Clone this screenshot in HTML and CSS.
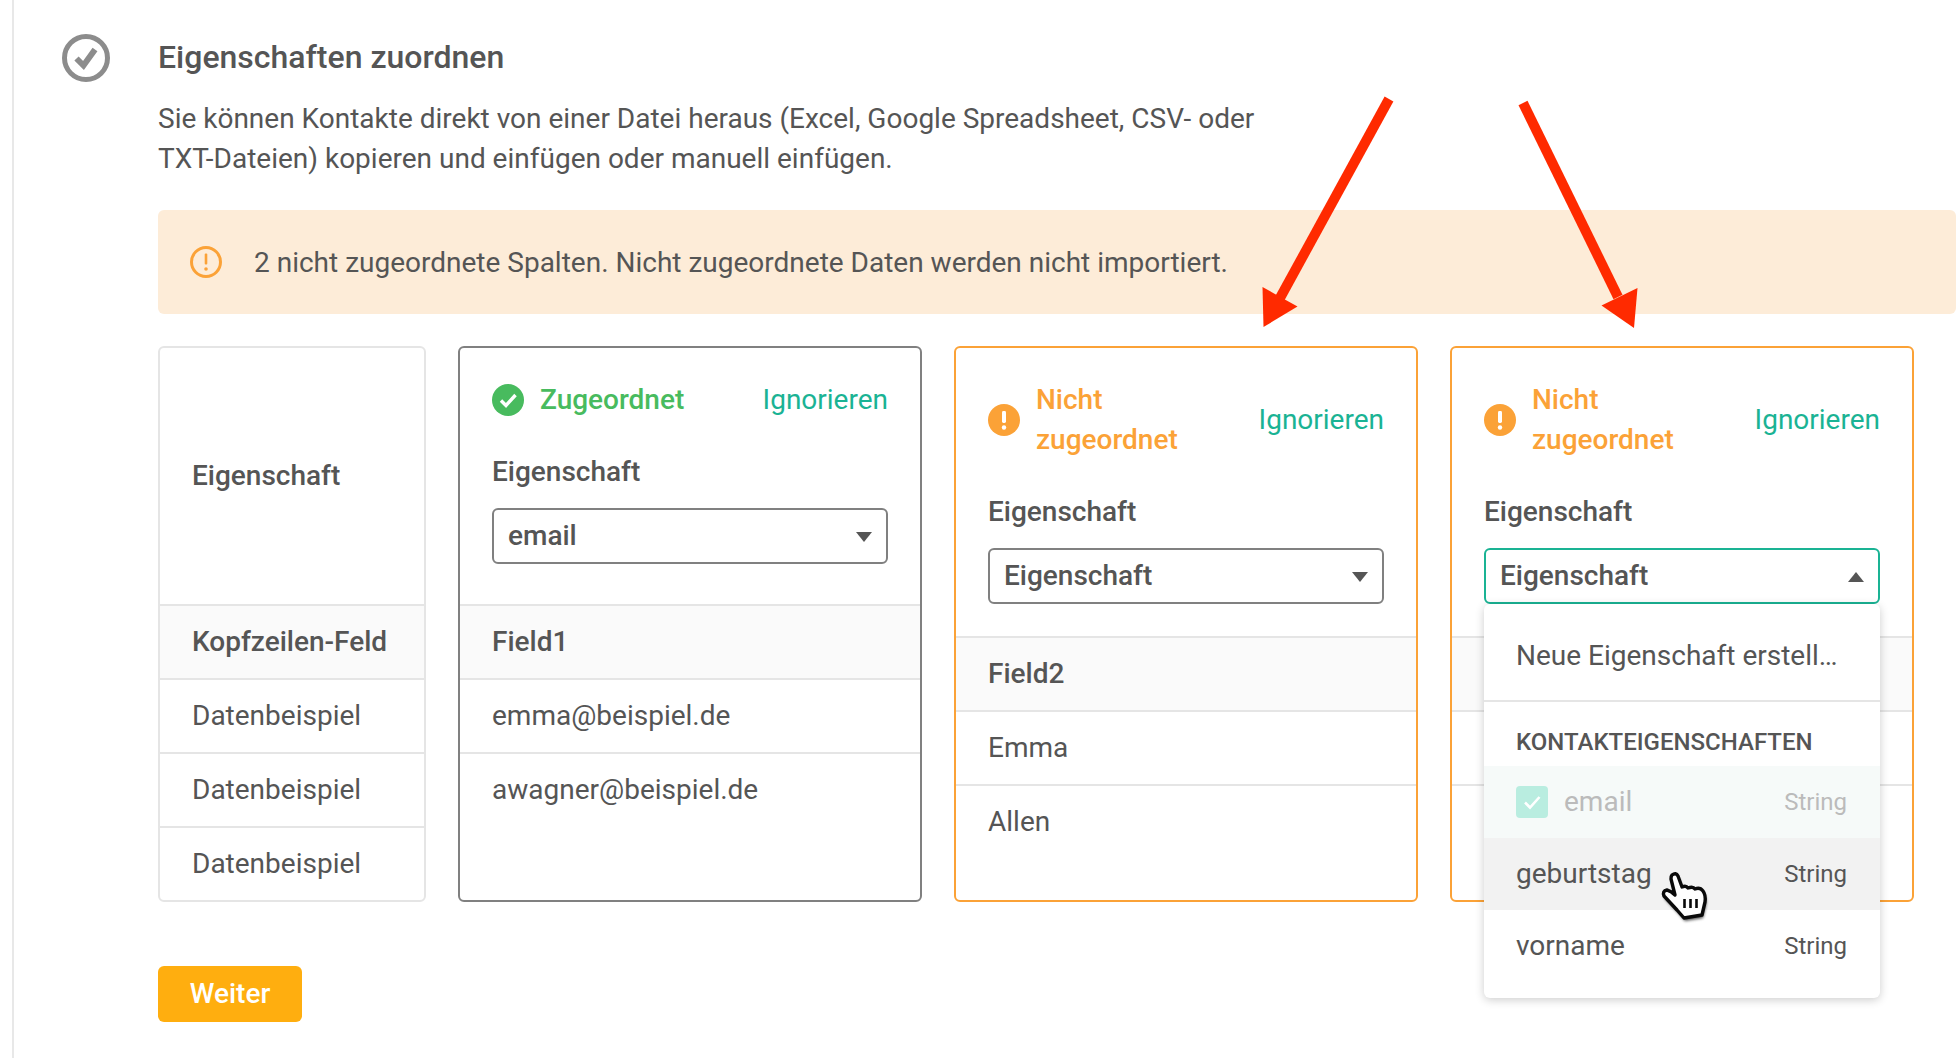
FILE: index.html
```html
<!DOCTYPE html>
<html lang="de">
<head>
<meta charset="utf-8">
<title>Eigenschaften zuordnen</title>
<link rel="stylesheet" href="styles.css">
</head>
<body>
<div class="page">
  <svg class="step-icon" viewBox="0 0 48 48" width="48" height="48"><circle cx="24" cy="24" r="21.5" fill="none" stroke="#8c8c8c" stroke-width="5"/><path d="M14.5 24.5l7 7L33 15.5" fill="none" stroke="#8c8c8c" stroke-width="6"/></svg>
  <main class="content">
    <h1 class="title">Eigenschaften zuordnen</h1>
    <p class="desc">Sie können Kontakte direkt von einer Datei heraus (Excel, Google Spreadsheet, CSV- oder<br>TXT-Dateien) kopieren und einfügen oder manuell einfügen.</p>
    <div class="alert">
      <svg viewBox="0 0 32 32" width="32" height="32"><circle cx="16" cy="16" r="14.5" fill="none" stroke="#fba237" stroke-width="3"/><rect x="14.7" y="7.5" width="2.6" height="11" rx="1" fill="#fba237"/><circle cx="16" cy="23" r="1.8" fill="#fba237"/></svg>
      <span class="alert-text">2 nicht zugeordnete Spalten. Nicht zugeordnete Daten werden nicht importiert.</span>
    </div>
    <div class="columns">
      <section class="card card-labels">
        <div class="head head-labels"><span class="strong">Eigenschaft</span></div>
        <div class="row row-head">Kopfzeilen-Feld</div>
        <div class="row">Datenbeispiel</div>
        <div class="row">Datenbeispiel</div>
        <div class="row">Datenbeispiel</div>
      </section>
      <section class="card card-mapped">
        <div class="head head-mapped">
          <div class="status">
            <svg class="status-icon" viewBox="0 0 32 32" width="32" height="32"><circle cx="16" cy="16" r="16" fill="#48bb5e"/><path d="M9 16.5l5 5L23.5 11" fill="none" stroke="#fff" stroke-width="3.4"/></svg>
            <span class="status-text ok">Zugeordnet</span>
            <a class="ignore">Ignorieren</a>
          </div>
          <div class="strong label">Eigenschaft</div>
          <div class="select"><span>email</span><i class="caret"></i></div>
        </div>
        <div class="row row-head">Field1</div>
        <div class="row">emma@beispiel.de</div>
        <div class="row">awagner@beispiel.de</div>
      </section>
      <section class="card card-warn">
        <div class="head">
          <div class="status">
            <svg class="status-icon" viewBox="0 0 32 32" width="32" height="32"><circle cx="16" cy="16" r="16" fill="#fba237"/><rect x="14" y="7" width="4" height="12" rx="1.4" fill="#fff"/><circle cx="16" cy="23.5" r="2.2" fill="#fff"/></svg>
            <span class="status-text warn">Nicht<br>zugeordnet</span>
            <a class="ignore">Ignorieren</a>
          </div>
          <div class="strong label">Eigenschaft</div>
          <div class="select"><span>Eigenschaft</span><i class="caret"></i></div>
        </div>
        <div class="row row-head">Field2</div>
        <div class="row">Emma</div>
        <div class="row">Allen</div>
      </section>
      <section class="card card-warn">
        <div class="head">
          <div class="status">
            <svg class="status-icon" viewBox="0 0 32 32" width="32" height="32"><circle cx="16" cy="16" r="16" fill="#fba237"/><rect x="14" y="7" width="4" height="12" rx="1.4" fill="#fff"/><circle cx="16" cy="23.5" r="2.2" fill="#fff"/></svg>
            <span class="status-text warn">Nicht<br>zugeordnet</span>
            <a class="ignore">Ignorieren</a>
          </div>
          <div class="strong label">Eigenschaft</div>
          <div class="select select-open"><span>Eigenschaft</span><i class="caret caret-up"></i>
            <div class="dropdown">
              <div class="dd-create"><span class="dd-create-text">Neue Eigenschaft erstellen</span></div>
              <div class="dd-title">KONTAKTEIGENSCHAFTEN</div>
              <div class="dd-item dd-selected">
                <span class="check"><svg viewBox="0 0 32 32" width="32" height="32"><path d="M9 16.5l5 5L23.5 11" fill="none" stroke="#fff" stroke-width="2.6"/></svg></span>
                <span class="dd-name">email</span><span class="dd-type">String</span>
              </div>
              <div class="dd-item dd-hover"><span class="dd-name">geburtstag</span><span class="dd-type">String</span></div>
              <div class="dd-item"><span class="dd-name">vorname</span><span class="dd-type">String</span></div>
            </div>
          </div>
        </div>
        <div class="row row-head"></div>
        <div class="row"></div>
        <div class="row"></div>
      </section>
    </div>
    <button class="next">Weiter</button>
  </main>
</div>
<svg class="overlay" viewBox="0 0 1960 1058" width="1960" height="1058">
  <defs><filter id="blur" x="-30%" y="-30%" width="160%" height="160%"><feGaussianBlur stdDeviation="1.5"/></filter></defs>
  <path class="arrow-shaft" d="M1389 99L1280 298"/>
  <path class="arrow-head" d="M1263.5 327L1262.5 287L1297.5 306.5Z"/>
  <path class="arrow-shaft" d="M1523 103L1618 297"/>
  <path class="arrow-head" d="M1634 328L1637.5 288L1601.5 305.5Z"/>
  <g transform="translate(1650 860)">
    <path class="hand-shadow" filter="url(#blur)" d="M22 15Q26 12 28 16L32 27Q36 25 38 28Q43 26 45 29Q50 27 53 31Q56 35 55 42L52 55L34 58L27 50L14 36Q12 31 17 30Q21 31 25 35L21 19Q21 16 22 15Z" transform="translate(1 3)"/>
    <path class="hand" d="M22 15Q26 12 28 16L32 27Q36 25 38 28Q43 26 45 29Q50 27 53 31Q56 35 55 42L52 55L34 58L27 50L14 36Q12 31 17 30Q21 31 25 35L21 19Q21 16 22 15Z"/>
    <path class="hand-lines" d="M34.5 39V48M40.5 39V48M46.5 39V48"/>
  </g>
</svg>
</body>
</html>
```
FILE: styles.css
```css
* { box-sizing: border-box; }
html, body { margin: 0; height: 100%; overflow: hidden; background: #fff; }
body { position: relative; font-family: Roboto, "Liberation Sans", sans-serif; font-size: 28px; line-height: 40px; color: #555; }
.page { display: flex; gap: 48px; margin-left: 12px; height: 1058px; padding: 34px 4px 0 48px; border-left: 2px solid #e8e8e8; }
.step-icon { flex: none; }
.content { flex: 1; min-width: 0; }
.title { margin: 3px 0 0; font-size: 32px; line-height: 40px; font-weight: 500; }
.desc { margin: 22px 0 0; }
.alert { display: flex; align-items: center; gap: 32px; height: 104px; margin-top: 31px; padding-left: 32px; background: #fdecd8; border-radius: 6px; }
.alert svg { flex: none; }
.alert-text { margin-top: 2px; }
.columns { display: grid; grid-template-columns: 268px 464px 464px 464px; gap: 32px; margin-top: 32px; }
.card { height: 556px; background: #fff; border: 2px solid #e5e5e5; border-radius: 6px; }
.card-mapped { border-color: #808080; }
.card-warn { border-color: #fba237; }
.head { padding: 32px 32px 32px; }
.head-labels { display: flex; align-items: center; height: 256px; }
.head-mapped { height: 256px; }
.strong { font-weight: 500; }
.status { display: flex; align-items: center; }
.status-icon { flex: none; margin-right: 16px; }
.status-text { font-weight: 500; }
.ok { color: #48bb5e; }
.warn { color: #fba237; }
.ignore { margin-left: auto; color: #1ab394; }
.label { margin-top: 32px; }
.select { position: relative; display: flex; align-items: center; justify-content: space-between; height: 56px; margin-top: 16px; padding: 0 14px; border: 2px solid #808080; border-radius: 6px; font-weight: 500; }
.select-open { border-color: #1ab394; }
.caret { width: 0; height: 0; margin-top: 2px; border-left: 8px solid transparent; border-right: 8px solid transparent; border-top: 10px solid #555; }
.caret-up { border-top: 0; border-bottom: 10px solid #555; }
.row { height: 74px; padding: 0 32px; border-top: 2px solid #e5e5e5; line-height: 72px; }
.row-head { background: #fafafa; font-weight: 500; }
.dropdown { position: absolute; z-index: 2; top: calc(100% + 2px); left: -2px; right: -2px; padding: 16px 0; background: #fff; border-radius: 6px; box-shadow: 0 2px 10px rgba(0, 0, 0, .2); font-weight: 400; }
.dd-create { height: 82px; padding: 16px 32px 0; border-bottom: 2px solid #e5e5e5; line-height: 40px; }
.dd-create-text { display: block; overflow: hidden; white-space: nowrap; text-overflow: ellipsis; }
.dd-title { height: 64px; padding: 20px 32px 0; font-size: 24px; font-weight: 500; }
.dd-item { display: flex; align-items: center; height: 72px; padding: 0 33px 0 32px; }
.dd-type { margin-left: auto; font-size: 24px; }
.dd-selected { background: #f6faf9; color: #bbb; }
.dd-hover { background: #f2f2f2; }
.check { display: block; width: 32px; height: 32px; margin-right: 16px; background: #b9ede0; border-radius: 4px; }
.check svg { display: block; }
.next { display: block; width: 144px; height: 56px; margin-top: 64px; padding: 0; background: #ffae0f; border: 0; border-radius: 6px; color: #fff; font: 500 28px/40px Roboto, "Liberation Sans", sans-serif; }
.overlay { position: absolute; z-index: 5; top: 0; left: 0; pointer-events: none; }
.arrow-shaft { fill: none; stroke: #ff2a00; stroke-width: 10; }
.arrow-head { fill: #ff2a00; }
.hand { fill: #fff; stroke: #0a0a0a; stroke-width: 3.4; stroke-linejoin: round; }
.hand-shadow { fill: #000; opacity: .7; }
.hand-lines { fill: none; stroke: #0a0a0a; stroke-width: 2.6; }
```
